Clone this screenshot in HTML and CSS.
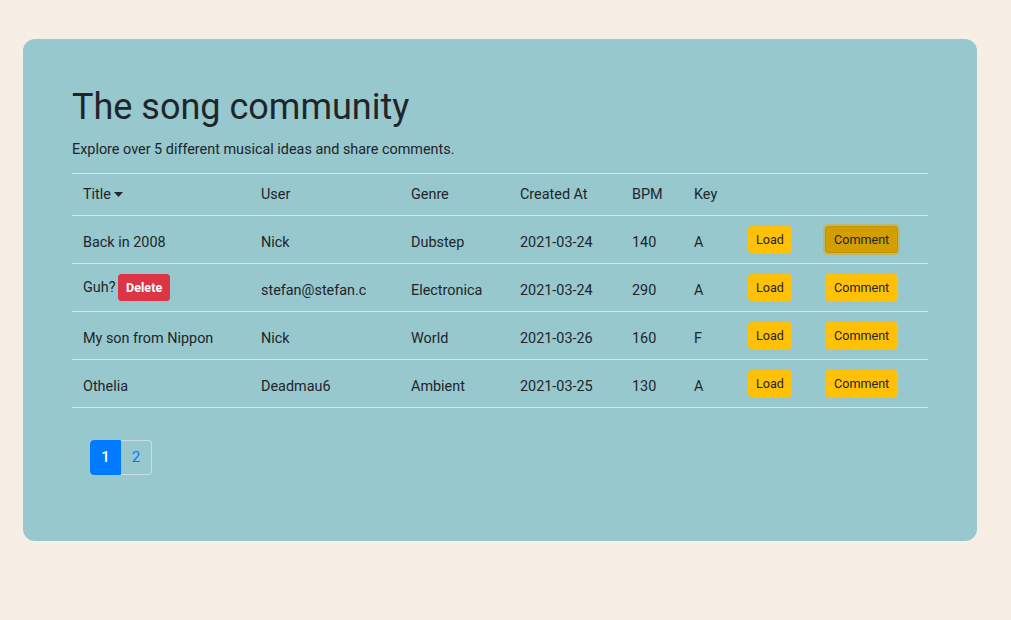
FILE: index.html
```html
<!DOCTYPE html>
<html lang="en">
<head>
<meta charset="utf-8">
<title>The song community</title>
<link rel="stylesheet" href="styles.css">
</head>
<body>
<div class="page">
  <div class="jumbo">
    <h1 class="title">The song community</h1>
    <p class="lead">Explore over 5 different musical ideas and share comments.</p>
    <table class="songs">
      <colgroup>
        <col class="c-title"><col class="c-user"><col class="c-genre"><col class="c-date"><col class="c-bpm"><col class="c-key"><col class="c-load"><col class="c-comment">
      </colgroup>
      <thead>
        <tr>
          <th>Title <svg class="caret" width="9" height="5" viewBox="0 0 9 5"><path d="M0 0H9L4.5 5Z" fill="#212529"/></svg></th>
          <th>User</th>
          <th>Genre</th>
          <th>Created At</th>
          <th>BPM</th>
          <th>Key</th>
          <th></th>
          <th></th>
        </tr>
      </thead>
      <tbody>
        <tr>
          <td>Back in 2008</td>
          <td>Nick</td>
          <td>Dubstep</td>
          <td>2021-03-24</td>
          <td>140</td>
          <td>A</td>
          <td class="act"><button class="btn btn-warn">Load</button></td>
          <td class="act"><button class="btn btn-warn wide is-active">Comment</button></td>
        </tr>
        <tr>
          <td class="act">Guh? <button class="btn btn-danger">Delete</button></td>
          <td>stefan@stefan.c</td>
          <td>Electronica</td>
          <td>2021-03-24</td>
          <td>290</td>
          <td>A</td>
          <td class="act"><button class="btn btn-warn">Load</button></td>
          <td class="act"><button class="btn btn-warn wide">Comment</button></td>
        </tr>
        <tr>
          <td>My son from Nippon</td>
          <td>Nick</td>
          <td>World</td>
          <td>2021-03-26</td>
          <td>160</td>
          <td>F</td>
          <td class="act"><button class="btn btn-warn">Load</button></td>
          <td class="act"><button class="btn btn-warn wide">Comment</button></td>
        </tr>
        <tr>
          <td>Othelia</td>
          <td>Deadmau6</td>
          <td>Ambient</td>
          <td>2021-03-25</td>
          <td>130</td>
          <td>A</td>
          <td class="act"><button class="btn btn-warn">Load</button></td>
          <td class="act"><button class="btn btn-warn wide">Comment</button></td>
        </tr>
      </tbody>
    </table>
    <ul class="pager">
      <li class="page-item active"><span class="page-link">1</span></li>
      <li class="page-item"><span class="page-link">2</span></li>
    </ul>
  </div>
</div>
</body>
</html>
```
FILE: styles.css
```css
* { box-sizing: border-box; }
html, body {
  margin: 0;
  padding: 0;
  background: #f7efe6;
  font-family: Roboto, "Liberation Sans", sans-serif;
  color: #212529;
}
.page {
  padding: 39px 0 79px 23px;
}
.jumbo {
  width: 954px;
  background: #96c8ce;
  border-radius: 12px;
  padding: 47px 49px 66px;
}
.title {
  margin: 0 0 10px;
  font-size: 36px;
  font-weight: 400;
  line-height: 43px;
}
.lead {
  margin: 0 0 13px;
  font-size: 14.4px;
  line-height: 21px;
}
.songs {
  width: 856px;
  border-collapse: collapse;
  table-layout: fixed;
  font-size: 14.4px;
  line-height: 21px;
  border-top: 1px solid #d3ebee;
}
.c-title { width: 178px; }
.c-user { width: 150px; }
.c-genre { width: 109px; }
.c-date { width: 112px; }
.c-bpm { width: 62px; }
.c-key { width: 54px; }
.c-load { width: 77px; }
.c-comment { width: 114px; }
.songs th, .songs td {
  text-align: left;
  font-weight: 400;
  border-bottom: 1px solid #d3ebee;
  white-space: nowrap;
  overflow: hidden;
}
.songs th {
  padding: 10px 11px;
  vertical-align: middle;
}
.songs td {
  padding: 15px 11px 9px;
  vertical-align: middle;
}
.songs td.act {
  padding: 10px 11px;
}
.caret {
  vertical-align: middle;
  margin-left: -1px;
  position: relative;
  top: -1px;
}
.btn {
  font-family: Roboto, "Liberation Sans", sans-serif;
  font-size: 12.6px;
  line-height: 17px;
  padding: 4px 7px;
  border: 1px solid transparent;
  border-radius: 3px;
  color: #212529;
  display: inline-block;
  vertical-align: baseline;
  cursor: pointer;
}
.btn.wide {
  padding: 4px 8px;
}
.btn-warn {
  background: #ffc107;
  border-color: #ffc107;
}
.btn-warn.is-active {
  background: #d39e00;
  border-color: #c69500;
  box-shadow: 0 0 0 2px rgba(222, 170, 12, 0.5);
}
.btn-danger {
  background: #dc3545;
  border-color: #dc3545;
  color: #fff;
  font-weight: 700;
  padding: 4px 7px;
  margin-left: -1px;
}
.pager {
  list-style: none;
  display: flex;
  margin: 32px 0 0 18px;
  padding: 0;
}
.page-link {
  display: block;
  font-size: 15px;
  line-height: 17px;
  padding: 8px 10px;
  border: 1px solid #c9dfe3;
  color: #007bff;
  min-width: 31px;
  text-align: center;
}
.page-item:first-child .page-link {
  border-radius: 4px 0 0 4px;
}
.page-item:last-child .page-link {
  border-radius: 0 4px 4px 0;
  border-left: 0;
}
.page-item.active .page-link {
  background: #007bff;
  border-color: #007bff;
  color: #fff;
  font-weight: 500;
}
```
